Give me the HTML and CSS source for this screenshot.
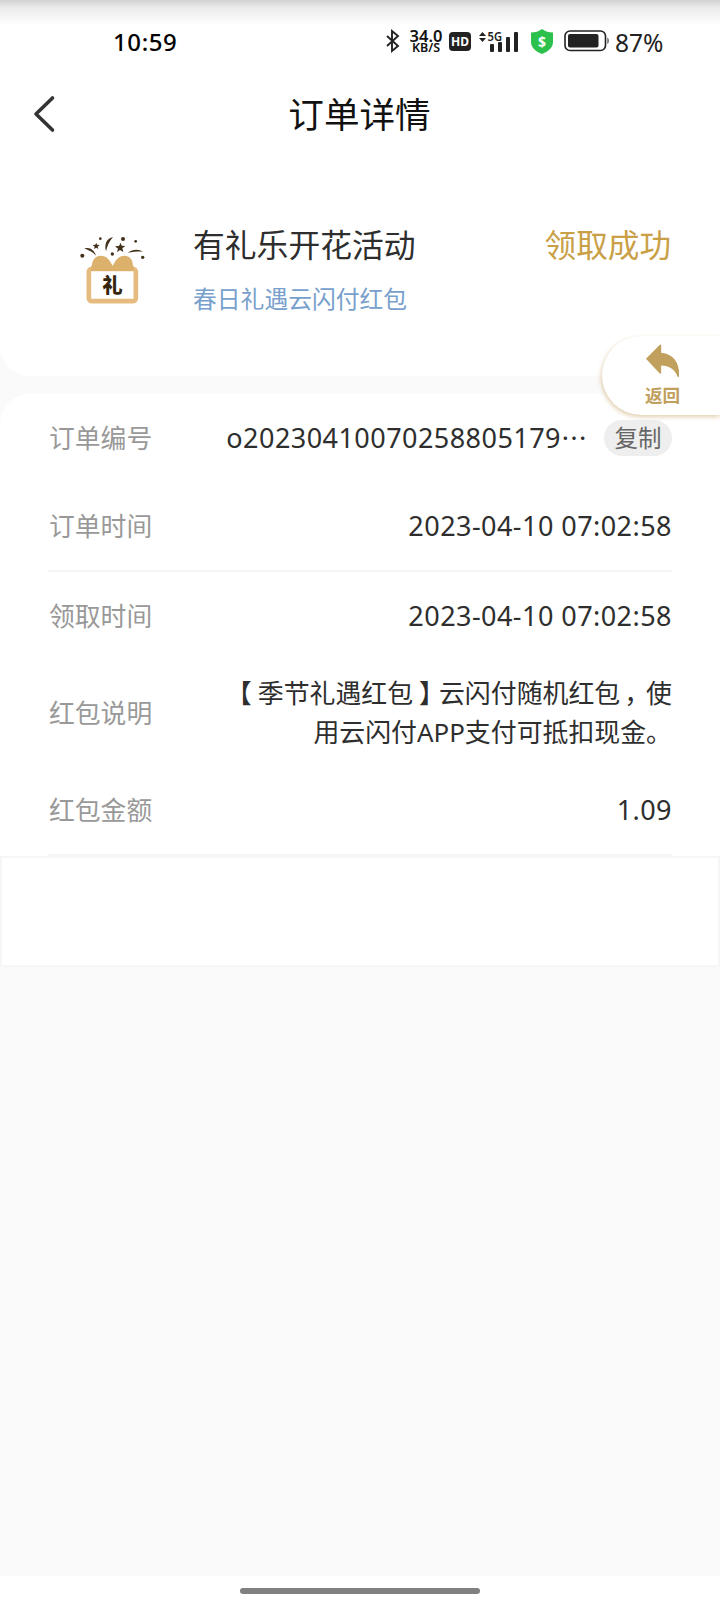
FILE: index.html
```html
<!DOCTYPE html>
<html lang="zh-CN">
<head>
    <meta charset="UTF-8">
    <meta name="viewport" content="width=device-width, initial-scale=1.0">
    <title>订单详情</title>
    <link rel="stylesheet" href="styles.css">
</head>
<body>
    <div class="status-bar">
        <span class="clock">10:59</span>
        <div class="status-icons">
            <svg class="bluetooth" width="16" height="24" viewBox="0 0 16 24" fill="none" stroke="#222" stroke-width="1.9">
                <path d="M2 7l11 10-6 5V2l6 5L2 17"/>
            </svg>
            <div class="speed"><span>34.0</span><small>KB/S</small></div>
            <span class="hd">HD</span>
            <svg class="signal" width="42" height="24" viewBox="0 0 42 24" fill="#222">
                <path d="M1 7l3.500-4L8 7zM1 9h7l-3.500 4z"/>
                <text x="9.500" y="11.500" font-size="12.500" font-weight="600" textLength="14.500" lengthAdjust="spacingAndGlyphs">5G</text>
                <rect x="12" y="15" width="4" height="8" rx="1"/>
                <rect x="20" y="13" width="4" height="10" rx="1"/>
                <rect x="28" y="8" width="4" height="15" rx="1"/>
                <rect x="36" y="3" width="4" height="20" rx="1"/>
            </svg>
            <svg class="shield" width="22" height="25" viewBox="0 0 22 25">
                <path d="M11 0c3 2.500 7 3.500 11 3.600V13c0 6-5 9.500-11 12C5 22.500 0 19 0 13V3.600C4 3.500 8 2.500 11 0z" fill="#2cc14c"/>
                <text x="11" y="17.500" font-size="14" font-weight="700" text-anchor="middle" fill="#fff">$</text>
            </svg>
            <svg class="battery" width="46" height="22" viewBox="0 0 46 22">
                <rect x="1" y="1" width="40.500" height="19.500" rx="5" fill="none" stroke="#222" stroke-width="1.600"/>
                <rect x="4" y="4" width="30.500" height="13.500" rx="2" fill="#222"/>
                <path d="M43.500 7.500c1.500 1 1.500 5.500 0 6.500z" fill="#222"/>
            </svg>
            <span class="percent">87%</span>
        </div>
    </div>

    <div class="nav">
        <svg class="back" width="24" height="40" viewBox="0 0 24 40" fill="none" stroke="#333" stroke-width="3.600" stroke-linecap="round" stroke-linejoin="round">
            <path d="M20.500 4L4 20l16.500 16"/>
        </svg>
        <h1>订单详情</h1>
    </div>

    <div class="card activity">
        <svg class="gift" width="74" height="74" viewBox="80 70 222 222">
            <path d="M126 178c-5-24 8-40 25-40 17 0 27 12 36 31 9-19 19-31 35-31 18 0 30 16 24 40z" fill="#dcb16c"/>
            <rect x="115.500" y="177.500" width="141" height="97" rx="9" fill="#fff" stroke="#e6bb80" stroke-width="14"/>
            <path d="M122 176h128" stroke="#dcb16c" stroke-width="16"/>
            <text x="186" y="250" font-size="61" font-weight="900" text-anchor="middle" fill="#35250d">礼</text>
            <g fill="#42301b">
                <circle cx="96" cy="138" r="6"/>
                <circle cx="150" cy="87" r="4"/>
                <circle cx="218" cy="88" r="6"/>
                <circle cx="256" cy="95" r="4"/>
                <circle cx="186" cy="133" r="5"/>
                <circle cx="277" cy="143" r="5"/>
                <path d="M102 116c17-5 30 5 35 22-9-10-19-15-35-22z"/>
                <path d="M188 82c-18 4-27 20-21 43 4-18 10-30 21-43z"/>
                <path d="M232 129c15-11 32-12 47-3-16-1-31 1-47 3z"/>
                <path d="M211 99l3 9 11 1-9 7 3 11-10-6-9 7 3-11-9-7 12-1z"/>
                <path d="M138 99l2 6 8 1-6 5 2 7-6-4-7 4 2-7-6-5 8-1z"/>
            </g>
        </svg>
        <div class="activity-text">
            <h2>有礼乐开花活动</h2>
            <p>春日礼遇云闪付红包</p>
        </div>
        <span class="result">领取成功</span>
    </div>

    <div class="card details">
        <div class="row">
            <span class="label">订单编号</span>
            <span class="value">o20230410070258805179<span class="dots">…</span></span>
            <button class="copy">复制</button>
        </div>
        <div class="row line">
            <span class="label">订单时间</span>
            <span class="value">2023-04-10 07:02:58</span>
        </div>
        <div class="row">
            <span class="label">领取时间</span>
            <span class="value">2023-04-10 07:02:58</span>
        </div>
        <div class="row tall">
            <span class="label">红包说明</span>
            <span class="value desc"><span class="open">【</span>季节礼遇红包<span class="close">】</span>云闪付随机红包<span class="comma">，</span>使<br>用云闪付APP支付可抵扣现金。</span>
        </div>
        <div class="row line">
            <span class="label">红包金额</span>
            <span class="value">1.09</span>
        </div>
    </div>
    <div class="blank"></div>

    <div class="home-bar"><span></span></div>

    <a class="float-back" href="#">
        <svg width="37" height="36" viewBox="370 400 112 108" fill="#c1a05e">
            <path d="M376 447l42-42q4-3 4 2v22c36 3 57 30 54 71q-2 6-5 0c-7-20-24-31-49-32v22q-1 4-5 1z"/>
        </svg>
        <span>返回</span>
    </a>
</body>
</html>
```

FILE: styles.css
```css
* {
    box-sizing: border-box;
}
body {
    margin: 0;
    min-height: 1608px;
    display: flex;
    flex-direction: column;
    background: #fafafa;
    color: #2e2e2e;
    font-family: "Noto Sans", "Noto Sans CJK SC", sans-serif;
}
h1, h2, p {
    margin: 0;
    font-weight: 400;
}

/* status bar */
.status-bar {
    height: 80px;
    padding: 2px 0 0 113px;
    display: flex;
    justify-content: space-between;
    align-items: center;
    background: linear-gradient(#d2d2d2, #ececec 8px, #fff 25px);
}
.clock {
    font-size: 24px;
    font-weight: 500;
    letter-spacing: 0.6px;
    color: #000;
}
.status-icons {
    display: flex;
    align-items: center;
    width: 335px;
}
.speed {
    width: 36px;
    margin-left: 7px;
    display: flex;
    flex-direction: column;
    align-items: center;
    font-size: 16.5px;
    font-weight: 600;
    line-height: 13px;
    color: #111;
}
.speed small {
    font-size: 12.5px;
    line-height: 11px;
}
.hd {
    width: 22px;
    height: 19px;
    margin-left: 5px;
    border-radius: 4px;
    background: #222;
    color: #fff;
    font-size: 12px;
    font-weight: 700;
    line-height: 19px;
    text-align: center;
}
.signal {
    margin-left: 7px;
}
.shield {
    margin-left: 11px;
}
.battery {
    margin-left: 11px;
}
.percent {
    margin-left: 5px;
    padding-top: 2px;
    font-size: 24.5px;
    color: #222;
}

/* title */
.nav {
    height: 80px;
    padding: 0 32px 12px;
    display: flex;
    align-items: center;
    background: #fff;
}
.nav h1 {
    flex: 1;
    padding: 0 25px 3px 0;
    font-size: 35.6px;
    text-align: center;
    color: #111;
}

.card {
    background: #fff;
}
.activity {
    height: 216px;
    padding: 64px 49px 0 77px;
    display: flex;
    align-items: flex-start;
    border-radius: 0 0 30px 30px;
}
.gift {
    margin-top: 9px;
}
.activity-text {
    flex: 1;
    padding-left: 42px;
}
.activity-text h2 {
    font-size: 31.8px;
    line-height: 42px;
}
.activity-text p {
    margin-top: 15px;
    font-size: 23.8px;
    line-height: 36px;
    color: #77a0cc;
}
.result {
    font-size: 31.6px;
    line-height: 42px;
    color: #caa046;
}

/* order info */
.details {
    margin-top: 18px;
    padding: 0 48px;
    border-radius: 30px 30px 0 0;
}
.row {
    height: 88px;
    display: flex;
    align-items: center;
}
.line {
    height: 90px;
    border-bottom: 2px solid #f5f5f5;
}
.tall {
    height: 106px;
}
.label {
    padding: 0 0 3px 1px;
    font-size: 25.8px;
    color: #999;
}
.value {
    flex: 1;
    padding-bottom: 2px;
    font-size: 27px;
    letter-spacing: 0.45px;
    text-align: right;
    white-space: nowrap;
}
.dots {
    font-family: "Noto Sans CJK SC", sans-serif;
    font-size: 26px;
    line-height: 1;
    letter-spacing: 0;
}
.desc {
    padding-bottom: 0;
    font-size: 25.9px;
    line-height: 39px;
    letter-spacing: 0;
}
.open {
    margin: 0 6px 0 -6px;
}
.close {
    margin-left: 6px;
    letter-spacing: -6px;
}
.comma {
    margin-left: 4px;
    letter-spacing: -4px;
}
.copy {
    width: 68px;
    height: 36px;
    margin-left: 17px;
    padding: 0;
    border: none;
    border-radius: 18px;
    background: #eee;
    color: #666;
    font-family: inherit;
    font-size: 23.5px;
    line-height: 34px;
}
.blank {
    height: 111px;
    background: #fff;
    border: 2px solid #f6f6f6;
}

.home-bar {
    height: 32px;
    margin-top: auto;
    padding-top: 12px;
    background: #fff;
}
.home-bar span {
    display: block;
    width: 240px;
    height: 6px;
    margin: 0 auto;
    border-radius: 3px;
    background: #808080;
}

/* return button over the right edge */
.float-back {
    position: absolute;
    top: 336px;
    right: 0;
    width: 118px;
    height: 79px;
    padding: 7px 0 0 42px;
    border-radius: 40px 0 0 40px;
    background: #fff;
    box-shadow: -1px 2px 4px rgba(190, 150, 80, 0.45);
    color: #c1a05e;
    font-size: 17.6px;
    font-weight: 600;
    line-height: 20px;
    text-decoration: none;
}
.float-back svg {
    display: block;
}
.float-back span {
    display: block;
    margin: 6px 0 0 1px;
}
```
